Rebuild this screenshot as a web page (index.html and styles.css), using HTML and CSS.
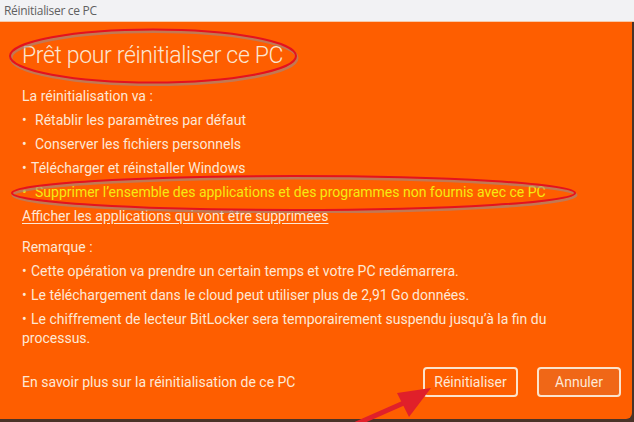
FILE: index.html
```html
<!DOCTYPE html>
<html lang="fr">
<head>
<meta charset="utf-8">
<title>Réinitialiser ce PC</title>
<link rel="stylesheet" href="styles.css">
</head>
<body>
<div class="window">
  <div class="titlebar">Réinitialiser ce PC</div>
  <div class="dialog">
    <h1 class="heading">Prêt pour réinitialiser ce PC</h1>
    <div class="intro">
      <p class="line">La réinitialisation va :</p>
      <p class="line"><span class="bullet wide">•</span>Rétablir les paramètres par défaut</p>
      <p class="line"><span class="bullet wide">•</span>Conserver les fichiers personnels</p>
      <p class="line"><span class="bullet">•</span>Télécharger et réinstaller Windows</p>
      <p class="line highlight"><span class="bullet wide">•</span>Supprimer l’ensemble des applications et des programmes non fournis avec ce PC</p>
      <a class="line link" href="#">Afficher les applications qui vont être supprimées</a>
    </div>
    <div class="remarks">
      <p class="rline">Remarque :</p>
      <p class="rline"><span class="bullet">•</span>Cette opération va prendre un certain temps et votre PC redémarrera.</p>
      <p class="rline"><span class="bullet">•</span>Le téléchargement dans le cloud peut utiliser plus de 2,91 Go données.</p>
      <p class="rline"><span class="bullet">•</span>Le chiffrement de lecteur BitLocker sera temporairement suspendu jusqu’à la fin du<br>processus.</p>
    </div>
    <div class="footer">
      <a class="more" href="#">En savoir plus sur la réinitialisation de ce PC</a>
      <div class="buttons">
        <button class="btn">Réinitialiser</button>
        <button class="btn cancel">Annuler</button>
      </div>
    </div>
    <svg class="mark-title" viewBox="0 0 300 60" width="300" height="60">
      <ellipse cx="150" cy="30" rx="143" ry="26.5" fill="none" stroke="#9a8a8a" stroke-width="3" opacity="0.6" transform="translate(1,2)"/>
      <ellipse cx="150" cy="30" rx="143" ry="26.5" fill="none" stroke="#e4121e" stroke-width="2"/>
    </svg>
    <svg class="mark-item" viewBox="0 0 590 40" width="590" height="40">
      <ellipse cx="291.5" cy="20" rx="281.5" ry="17" fill="none" stroke="#9a8a8a" stroke-width="3" opacity="0.6" transform="translate(1,2)"/>
      <ellipse cx="291.5" cy="20" rx="281.5" ry="17" fill="none" stroke="#e4121e" stroke-width="2"/>
    </svg>
  </div>
  <div class="bottom-edge"></div>
  <svg class="arrow" viewBox="0 0 100 50" width="100" height="50">
    <line x1="2" y1="48" x2="52" y2="26" stroke="#e0202a" stroke-width="5"/>
    <polygon points="77,12 43,17 55,41" fill="#e0202a"/>
  </svg>
</div>
</body>
</html>
```
FILE: styles.css
```css
html, body {
  margin: 0;
  padding: 0;
  width: 634px;
  height: 422px;
  overflow: hidden;
  background: #4a3328;
}
.window {
  position: relative;
  width: 634px;
  height: 422px;
  display: flex;
  flex-direction: column;
  font-family: Roboto, "Open Sans", sans-serif;
}
.titlebar {
  height: 22px;
  line-height: 22px;
  background: #f2f2f4;
  color: #606060;
  font-family: "Open Sans", sans-serif;
  font-size: 12px;
  letter-spacing: -0.3px;
  padding-left: 4px;
  border-bottom: 1px solid #f7c9a8;
  box-sizing: border-box;
}
.dialog {
  position: relative;
  height: 397px;
  box-sizing: border-box;
  background: #fe5e00;
  border-bottom-right-radius: 6px;
  margin-right: 2px;
  padding: 18px 11px 22px 22px;
  display: flex;
  flex-direction: column;
  color: #fde8d6;
}
.heading {
  margin: 0;
  font-weight: 300;
  font-size: 23px;
  line-height: 32px;
  letter-spacing: -0.35px;
  color: #fbe6d2;
}
.intro {
  margin-top: 12px;
  display: flex;
  flex-direction: column;
  font-size: 14px;
}
.line {
  margin: 0;
  line-height: 24px;
  height: 24px;
  white-space: nowrap;
}
.bullet {
  display: inline-block;
  width: 9px;
}
.bullet.wide {
  width: 13px;
}
.highlight {
  color: #f6ea10;
}
.link {
  color: #fde8d6;
  text-decoration: underline;
  text-underline-offset: 2px;
  align-self: flex-start;
}
.remarks {
  margin-top: 9.5px;
  display: flex;
  flex-direction: column;
  gap: 5px;
  font-size: 14px;
}
.rline {
  margin: 0;
  line-height: 19px;
}
.footer {
  margin-top: auto;
  display: flex;
  align-items: center;
  justify-content: space-between;
  font-size: 14px;
}
.more {
  color: #fde8d6;
  text-decoration: none;
}
.buttons {
  display: flex;
  gap: 19px;
}
.btn {
  height: 30px;
  box-sizing: border-box;
  border: 2px solid #fbe3cc;
  border-radius: 4px;
  background: #fe5e00;
  color: #fde8d6;
  font-family: inherit;
  font-size: 14px;
  padding: 0 8px;
  width: 95px;
}
.btn.cancel {
  width: 84px;
  background: #f06717;
}
.mark-title {
  position: absolute;
  left: 3px;
  top: 4px;
}
.mark-item {
  position: absolute;
  left: 2px;
  top: 151px;
}
.bottom-edge {
  flex: 1;
}
.arrow {
  position: absolute;
  left: 354px;
  top: 376px;
}
```
